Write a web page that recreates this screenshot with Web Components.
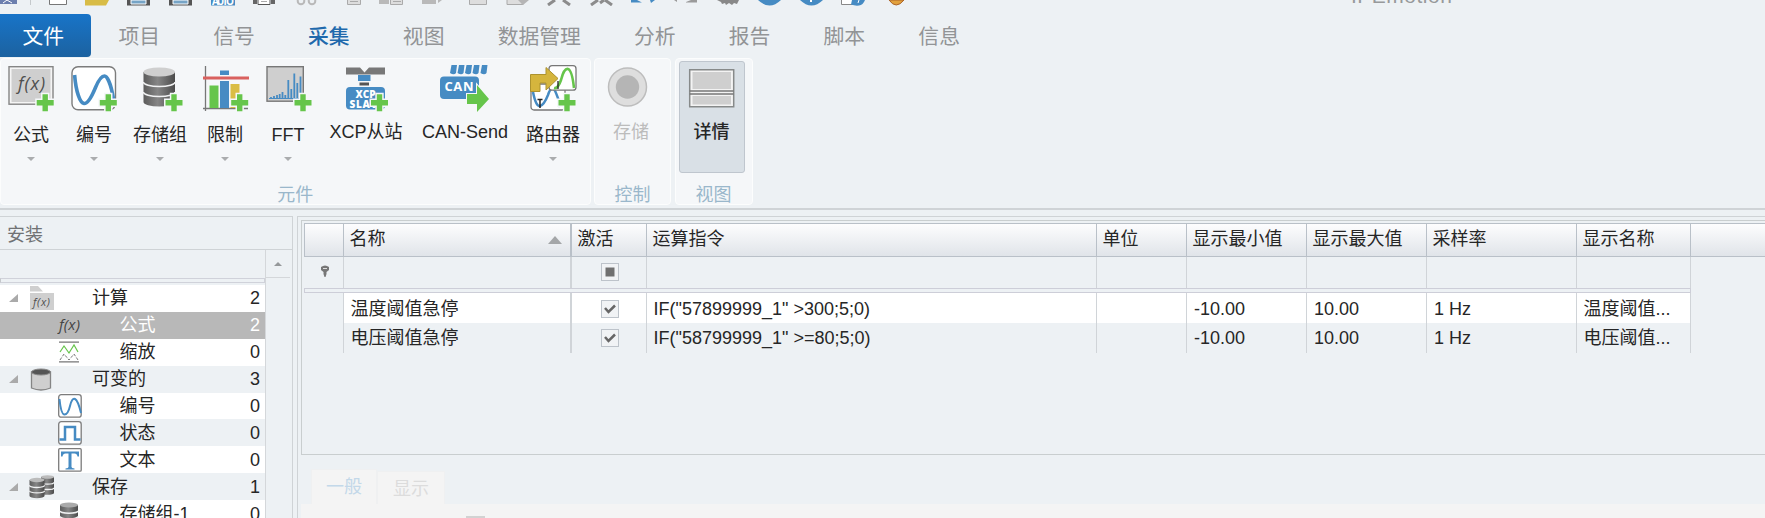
<!DOCTYPE html>
<html lang="zh-CN">
<head>
<meta charset="utf-8">
<title>IPEmotion</title>
<style>
  html, body {
    margin: 0;
    height: 100%;
    overflow: hidden;
  }

  body {
    background: #edf1f4;
    color: #262626;
    font: 18px/24px "Liberation Sans", "Noto Sans CJK SC", sans-serif;
    --line: #cfd3d6;
  }
</style>
</head>
<body>
<ie-app></ie-app>

<script>
const PLUS = (x, y) => `<path d="M${x - 2.7} ${y - 8.5}h5.4v5.8h5.8v5.4h-5.8v5.8h-5.4v-5.8h-5.8v-5.4h5.8z" fill="#66c54b" stroke="#f5f7f9" stroke-width="3" paint-order="stroke"/>`;

const DRUM = (x, y, w, h, top, body) => `
  <path d="M${x} ${y}v${h}a${w / 2} ${w / 7} 0 0 0 ${w} 0v-${h}z" fill="${body}"/>
  <ellipse cx="${x + w / 2}" cy="${y}" rx="${w / 2}" ry="${w / 7}" fill="${top}"/>
  <path d="M${x} ${y + h / 3}a${w / 2} ${w / 7} 0 0 0 ${w} 0M${x} ${y + h * 2 / 3}a${w / 2} ${w / 7} 0 0 0 ${w} 0" fill="none" stroke="#f1f2f3" stroke-width="${Math.max(1.3, w / 20)}"/>`;

const METAL = id => `<defs><linearGradient id="${id}"><stop stop-color="#5c5c5c"/><stop offset=".45" stop-color="#868686"/><stop offset="1" stop-color="#4b4b4b"/></linearGradient></defs>`;

const ICONS = {
  formula: [48, 48, `
    <rect x="2" y="1.7" width="44" height="37.5" fill="#f5f5f5" stroke="#858585" stroke-width="1.4"/>
    <rect x="4.5" y="4" width="39" height="33" fill="#cfcfcf"/>
    <text x="11" y="24.5" font-family="Open Sans" font-style="italic" font-size="18" textLength="27" fill="#505050">f(x)</text>
    ${PLUS(38.2, 37.8)}`],
  number: [48, 48, `
    <rect x="2" y="1.7" width="43.5" height="43" rx="6" fill="#fff" stroke="#7c7c7c" stroke-width="1.4"/>
    <path d="M4.6 10C6 27 10 38 14 38.500S22 31 25.500 22.500S32 11 34.500 11S41 19 43.500 34" fill="none" stroke="#468bc3" stroke-width="3.6"/>
    ${PLUS(38.3, 37.8)}`],
  storage: [48, 48, `${METAL('m1')}${DRUM(7.5, 7, 31.5, 30, '#cfcfcf', 'url(#m1)')}${PLUS(38, 37.8)}`],
  limit: [48, 48, `
    <path d="M4.500 1v45M2 43.500h45" stroke="#777" stroke-width="1.3"/>
    <path d="M8.500 20.500h9V43h-9z" fill="#66c54b"/>
    <path d="M19 5.500h9V10h-9zM19 16h9v27h-9z" fill="#468bc3"/>
    <path d="M29.500 19h9v24h-9z" fill="#dabd45"/>
    <path d="M2 13h46" stroke="#d9615f" stroke-width="3"/>
    ${PLUS(38.7, 37.8)}`],
  fft: [48, 48, `
    <rect x="3" y="1.700" width="36.300" height="34.500" fill="#cfcfcf" stroke="#777" stroke-width="1.400"/>
    <path d="M5 33.500h32" stroke="#468bc3"/>
    <path d="M7 34v-2M10 34v-3M13 34v-4M15.700 34v-5M18.500 34v-7M21.300 34v-4M24.300 34v-19M27.300 34v-10M30.300 34V8.500M33.300 34V18M36.500 34V11.500" stroke="#468bc3" stroke-width="1.800"/>
    ${PLUS(39, 37.8)}`],
  xcp: [48, 48, `
    <path d="M4 2.500h14l4.500 5 4.500-5h16v7H4z" fill="#787878"/>
    <path d="M16 10h12.500v6H16z" fill="#468bc3"/>
    <path d="M17.500 17.500h9.500v3h-9.500z" fill="#555"/>
    <rect x="4" y="22" width="39" height="22.500" rx="4" fill="#468bc3"/>
    <text x="13.500" y="32.500" font-family="Open Sans" font-weight="800" font-size="10" textLength="20" fill="#fff">XCP</text>
    <text x="7.500" y="43" font-family="Open Sans" font-weight="800" font-size="10" textLength="28" fill="#fff">SLAV</text>
    ${PLUS(37.5, 37.8)}`],
  can: [50, 48, `
    <path d="M11.500 0h5.500l-1 8q-2 2.500-6 0zM19 0h5.500l-1 8q-2 2.500-6 0zM26.500 0H32l-1 8q-2 2.500-6 0zM34 0h5.500l-1 8q-2 2.500-6 0zM42 0h5.500l-1 8q-2 2.500-6 0z" fill="#468bc3"/>
    <rect y="11.500" width="39" height="22.500" rx="4" fill="#468bc3"/>
    <text x="4.500" y="26" font-family="Open Sans" font-weight="700" font-size="13" textLength="29" fill="#fff">CAN</text>
    <path d="M27 29h10v-9l12 14-12 13v-8H27z" fill="#66c54b" stroke="#f5f7f9" stroke-width="2" paint-order="stroke"/>`],
  router: [48, 48, `
    <rect x="2" y="19" width="34" height="26" rx="3" fill="#fff" stroke="#777" stroke-width="1.300"/>
    <path d="M4 27q3 15 7 14t8-11q4-12 8-2 3 6 4 14" fill="none" stroke="#468bc3" stroke-width="2.500"/>
    <path d="M11 34v9M8.500 34.500h5" stroke="#222" stroke-width="1.500"/>
    <rect x="20" y=".7" width="27" height="24.500" rx="3" fill="#fff" stroke="#777" stroke-width="1.300"/>
    <path d="M25 23q4 1 7-8 3-12 7-11t6 19" fill="none" stroke="#66c54b" stroke-width="2.600"/>
    <path d="M29 16v8" stroke="#222" stroke-width="1.300"/>
    <path d="M1.500 26.500V9.500H17V2.500L29 13.500 17 25v-7h-6v8.500z" fill="#d5b53d" stroke="#ad932f"/>
    ${PLUS(38, 37.8)}`],
  record: [48, 48, `
    <circle cx="20.5" cy="22" r="19" fill="#dedede" stroke="#bdbdbd" stroke-width="1.500"/>
    <circle cx="20.5" cy="22" r="11.700" fill="#b5b5b5"/>`],
  details: [48, 48, `
    <path d="M1.700 4.700h44v37h-44z" fill="#f3f3f3" stroke="#878a8a" stroke-width="1.500"/>
    <path d="M4.500 7h38.500v17H4.500zM4.500 31h38.500v8.500H4.500z" fill="#cfcfcf"/>
    <path d="M1.700 26h44M1.700 29h44" stroke="#777" stroke-width="1.300"/>`],
  folderFx: [26, 26, `
    <path d="M1 1h8l5 5.500H1zM1 8h24v17H1z" fill="#cfcfcf"/>
    <text x="4" y="21" font-family="Open Sans" font-style="italic" font-size="11" textLength="17" fill="#505050">f(x)</text>`],
  fx: [26, 26, `<text x="2" y="18" font-family="Open Sans" font-style="italic" font-size="15" textLength="21" fill="#444">f(x)</text>`],
  scale: [26, 26, `
    <path d="M2 3.200h20M2 22.800h20" stroke="#777" stroke-width="1.300"/>
    <path d="M3 13l4-6 5 7 5-8 4 7" fill="none" stroke="#66c54b" stroke-width="1.200"/>
    <path d="M3 21l4-6 5 6 5-6 4 6" fill="none" stroke="#777" stroke-dasharray="3 1.500"/>`],
  drum: [26, 26, `
    <path d="M2.500 6v16q9.500 4 19 0V6z" fill="#cfcfcf" stroke="#858585" stroke-width="1.300"/>
    <ellipse cx="12" cy="6" rx="9.500" ry="3" fill="#555" stroke="#888"/>`],
  wave: [26, 26, `
    <rect x="1.700" y="1.700" width="22.500" height="22.500" rx="2.500" fill="#fff" stroke="#7c7c7c" stroke-width="1.300"/>
    <path d="M2.500 6Q4 21.500 7.500 21.500T13 13T18 6T24 20" fill="none" stroke="#468bc3" stroke-width="2"/>`],
  state: [26, 26, `
    <rect x="1.700" y="1.700" width="22.500" height="22.500" rx="2.500" fill="#fff" stroke="#7c7c7c" stroke-width="1.300"/>
    <path d="M2.500 19.500H8V7h10v12.500h5.500" fill="none" stroke="#468bc3" stroke-width="2.500"/>`],
  text: [26, 26, `
    <rect x="1.700" y="1.700" width="22.500" height="22.500" rx="1" fill="#fff" stroke="#7c7c7c" stroke-width="1.300"/>
    <path d="M4 4.500h18v5h-1.500q-.5-3-3-3h-3V20q0 1 3 1.500v1h-9v-1q3-.5 3-1.500V6.500h-3q-2.500 0-3 3H4z" fill="#468bc3"/>`],
  drums: [26, 26, `${METAL('m2')}${DRUM(12, 3, 13, 16, '#bbb', 'url(#m2)')}${DRUM(.5, 6, 15, 16, '#bbb', 'url(#m2)')}`],
  drumDark: [26, 26, `${METAL('m3')}${DRUM(3, 4, 18, 17, '#aaa', 'url(#m3)')}`],
  pin: [12, 14, `<path d="M1 2q4-3 8 0v3L6.500 7v2l-1 3H4.500L3.500 9V7L1 5z" fill="#777"/><path d="M3 3.500h4" stroke="#ddd"/>`],
  // lower edges of the quick access buttons, the rest is above the window
  quick: [920, 6, `
    <path d="M0 0h17v4H0z" fill="#6c7fae"/><path d="M3 3l4-3 5 3" stroke="#fff" fill="none"/>
    <path d="M30.500 0v5" stroke="#c5c9cc"/>
    <path d="M49.500-2h17v6.500h-17z" fill="#fff" stroke="#777"/>
    <path d="M85 0h24l-3 5.500H85z" fill="#d8bc46"/>
    <path d="M127 0h23v5.500h-23zM169 0h23v5.500h-23z" fill="#555"/>
    <path d="M131 0h15v4h-15zM173 0h15v4h-15z" fill="#76a4c6" stroke="#fff"/>
    <path d="M211 0h24v5.500h-24z" fill="#468bc3"/>
    <text x="212" y="4.500" font-family="Open Sans" font-weight="700" font-size="10" textLength="22" fill="#fff">AUTO</text>
    <path d="M253 0h4v4h-4zM271 0h4v4h-4z" fill="#666"/><path d="M258-1h12v5.500h-12z" fill="#fff" stroke="#555"/><path d="M261 1.500h6" stroke="#aaa"/>
    <g fill="none" stroke="#b9b9b9" stroke-width="2"><circle cx="301" cy="1" r="3.300"/><circle cx="312" cy="1" r="3.300"/></g>
    <path d="M347.500-1h13v5.500h-13zM390.500-1h12v5.500h-12zM469.500-1h17v5.500h-17z" fill="#ddd" stroke="#aaa"/>
    <path d="M350 1.500h8M393 1.500h8" stroke="#aaa"/>
    <path d="M379 0h10v4h-10zM422 0h14v4h-14zM438 0h4l-4 3z" fill="#b9b9b9"/>
    <path d="M507-1h12l4 5.500h-16z" fill="#ddd" stroke="#aaa"/><path d="M518 0h11l-6 5z" fill="#b5b5b5"/>
    <path d="M548 5l7-5M570 5l-7-5M591 5l7-5M612 5l-7-5M600 3l4-3" stroke="#8c8c8c" stroke-width="3"/>
    <path d="M631 0h6l5 2.500h-11zM650 0h5l-4 3z" fill="#468bc3"/>
    <path d="M686 2l5-2h6v2.500h-11zM674 0h3v2z" fill="#9a9a9a"/>
    <path d="M717 0h22l-2 4-3-1-2 2-3-2-3 2-1-2-3 1-1-2z" fill="#888"/>
    <path d="M758 0h23q-11.500 11-23 0zM800 0h23q-11.500 11-23 0z" fill="#468bc3"/>
    <path d="M811 0v2" stroke="#fff" stroke-width="2"/>
    <path d="M841.500-1h12v5.500h-12z" fill="#fff" stroke="#888"/><path d="M852 0h13q-2 5-6 5.500t-8-1z" fill="#468bc3"/><path d="M858 3l1-3" stroke="#fff"/>
    <path d="M889 0q7 10 15 0z" fill="#e2a13c" stroke="#aa6328"/>`]
};

class UiIcon extends HTMLElement {
  connectedCallback() {
    const [w, h, art] = ICONS[this.getAttribute('name')];
    this.attachShadow({ mode: 'open' }).innerHTML = `
      <style>
        :host { display: block; flex: none; width: ${w}px; height: ${h}px; }
        svg { display: block; }
      </style>
      <svg width="${w}" height="${h}" viewBox="0 0 ${w} ${h}">${art}</svg>
    `;
  }
}

class MenuTab extends HTMLElement {
  constructor() {
    super();
    this.attachShadow({ mode: 'open' }).innerHTML = `
      <style>
        :host {
          display: block;
          margin-right: 53.200px;
          font-size: 20.800px;
          line-height: 45px;
          color: #929496;
          white-space: nowrap;
        }
        :host([active]) { color: #2069ac; font-weight: 500; }
        :host([file]) {
          box-sizing: border-box;
          width: 91px;
          height: 43px;
          margin-right: 27.500px;
          padding-left: 22.500px;
          border-radius: 0 4px 4px 0;
          background: linear-gradient(#1874c8, #1c62a0);
          color: #fff;
        }
      </style>
      <slot></slot>
    `;
  }
}

class RibbonButton extends HTMLElement {
  connectedCallback() {
    const arrow = this.hasAttribute('menu');
    this.attachShadow({ mode: 'open' }).innerHTML = `
      <style>
        :host {
          display: flex;
          flex-direction: column;
          align-items: center;
          box-sizing: border-box;
          flex: none;
          width: ${this.getAttribute('width')}px;
          height: 112px;
          padding-top: 4px;
          white-space: nowrap;
        }
        :host([pressed]) {
          padding-top: 3px;
          border: 1.500px solid #bfc6ce;
          border-radius: 3px;
          background: #d9e0e6;
          font-weight: 500;
        }
        :host([disabled]) { color: #bcbcbc; }
        .label { margin-top: ${arrow ? 10 : 7}px; }
        .arrow {
          margin-top: 10px;
          border: 4px solid transparent;
          border-top-color: #aaacae;
          border-bottom: 0;
        }
      </style>
      <ui-icon name="${this.getAttribute('icon')}"></ui-icon>
      <span class="label"><slot></slot></span>
      ${arrow ? '<span class="arrow"></span>' : ''}
    `;
  }
}

class RibbonGroup extends HTMLElement {
  connectedCallback() {
    this.attachShadow({ mode: 'open' }).innerHTML = `
      <style>
        :host {
          display: flex;
          flex-direction: column;
          box-sizing: border-box;
          height: 147px;
          padding-top: 2px;
          border: 1px solid #fcfdfd;
          border-radius: 4px;
          background: #f5f7f9;
        }
        .items { display: flex; height: 112px; }
        .caption { padding-top: 10px; text-align: center; color: #9ab7cb; }
      </style>
      <div class="items"><slot></slot></div>
      <div class="caption">${this.getAttribute('caption')}</div>
    `;
  }
}

class TreeRow extends HTMLElement {
  connectedCallback() {
    const group = this.hasAttribute('group');
    this.attachShadow({ mode: 'open' }).innerHTML = `
      <style>
        :host {
          display: flex;
          align-items: center;
          box-sizing: border-box;
          height: 26.900px;
          padding: 0 5px 0 ${group ? 9 : 57}px;
          background: #fff;
        }
        :host([alt]) { background: #edf1f4; }
        :host([selected]) { background: #b8b8b8; color: #fff; }
        .expander {
          width: 0;
          margin-right: 11px;
          border-left: 9px solid transparent;
          border-bottom: 8px solid #aaa;
        }
        .name { flex: 1; margin-left: ${group ? 37 : 36.5}px; white-space: nowrap; }
      </style>
      ${group ? '<span class="expander"></span>' : ''}
      <ui-icon name="${this.getAttribute('icon')}"></ui-icon>
      <span class="name"><slot></slot></span>
      <span>${this.getAttribute('count')}</span>
    `;
  }
}

class TreePanel extends HTMLElement {
  constructor() {
    super();
    this.attachShadow({ mode: 'open' }).innerHTML = `
      <style>
        :host {
          display: flex;
          flex-direction: column;
          box-sizing: border-box;
          width: 293px;
          border: solid var(--line);
          border-width: 1px 1px 0 0;
        }
        .title {
          height: 32px;
          padding-left: 7px;
          border-bottom: 1px solid var(--line);
          line-height: 37px;
          color: #707274;
        }
        .body { display: flex; flex: 1; min-height: 0; }
        .list { width: 265px; border-right: 1px solid #d4d7da; }
        .filter { height: 28px; }
        .split {
          box-sizing: border-box;
          height: 5px;
          margin-bottom: 2px;
          border: 1px solid #d0d2da;
          border-left-color: #c5c8cc;
        }
        .up {
          display: flex;
          align-items: center;
          justify-content: center;
          width: 24px;
          height: 26px;
          margin-top: 1px;
          border-bottom: 1px solid #d4d7da;
        }
        .up::before {
          content: "";
          border: 4px solid transparent;
          border-bottom-color: #95989a;
          border-top: 0;
        }
      </style>
      <div class="title">安装</div>
      <div class="body">
        <div class="list">
          <div class="filter"></div>
          <div class="split"></div>
          <slot></slot>
        </div>
        <div class="up"></div>
      </div>
    `;
  }
}

class CheckBox extends HTMLElement {
  connectedCallback() {
    const mixed = this.hasAttribute('mixed');
    this.attachShadow({ mode: 'open' }).innerHTML = `
      <style>
        :host {
          display: block;
          box-sizing: border-box;
          width: 18px;
          height: 18px;
          border: 1.500px solid #bdc3ca;
          background: #f1f3f5;
        }
        svg { display: block; }
      </style>
      <svg width="16" height="16" viewBox="0 0 16 16">
        ${mixed ? '<path d="M3.500 3.500h9v9h-9z" fill="#707070"/>' : '<path d="M3 7l3.500 4L13 4.500" fill="none" stroke="#666" stroke-width="2.500"/>'}
      </svg>
    `;
  }
}

const HEADERS = ['', '名称', '激活', '运算指令', '单位', '显示最小值', '显示最大值', '采样率', '显示名称'];

const ROWS = [
  ['', '温度阈值急停', '<check-box></check-box>', 'IF("57899999_1" &gt;300;5;0)', '', '-10.00', '10.00', '1 Hz', '温度阈值...'],
  ['', '电压阈值急停', '<check-box></check-box>', 'IF("58799999_1" &gt;=80;5;0)', '', '-10.00', '10.00', '1 Hz', '电压阈值...']
];

class DataGrid extends HTMLElement {
  constructor() {
    super();
    const filters = ['<ui-icon name="pin"></ui-icon>', '', '<check-box mixed></check-box>', '', '', '', '', '', ''];
    this.attachShadow({ mode: 'open' }).innerHTML = `
      <style>
        :host {
          display: block;
          box-sizing: border-box;
          padding: 2px 0 0 2px;
          border: 1px solid #c9cecf;
          border-right: 0;
        }
        .row {
          display: grid;
          grid-template-columns: 40px 228px 75px 450px 90px 120px 120px 150px 114px;
          box-sizing: border-box;
        }
        .cell {
          display: flex;
          align-items: center;
          box-sizing: border-box;
          padding-left: 6.500px;
          border-right: 1px solid #d0d4d8;
          white-space: nowrap;
        }
        .cell:nth-child(2) { border-right-width: 2px; }
        .cell:nth-child(3) check-box { margin-left: 22px; }
        .head {
          height: 34px;
          border: solid #b9c0c8;
          border-width: 1px 0;
          background: linear-gradient(#fdfdfe, #e0e4e9);
        }
        .head .cell { padding: 0 0 2px 5.500px; border-color: #b9c0c8; }
        .head .cell:first-child { border-left: 1px solid #b9c0c8; }
        .sort {
          margin: 2px 8px 0 auto;
          border: 7px solid transparent;
          border-bottom: 8px solid #a4a6a8;
          border-top: 0;
        }
        .filter { height: 31px; }
        .filter .cell { padding-bottom: 2px; }
        .filter .cell:first-child { padding-left: 15.500px; }
        .split {
          box-sizing: border-box;
          width: 1387px;
          height: 5px;
          border: 1px solid #cdced8;
        }
        .data { height: 30px; }
        .data .cell:nth-child(6), .data .cell:nth-child(7), .data .cell:nth-child(8) { padding-left: 7px; }
        .data.odd .cell { padding-top: 1px; }
        .data.odd .cell:not(:first-child) { background: #fff; }
      </style>
      <div class="row head">${HEADERS.map((h, i) => `<div class="cell">${h}${i === 1 ? '<span class="sort"></span>' : ''}</div>`).join('')}</div>
      <div class="row filter">${filters.map(f => `<div class="cell">${f}</div>`).join('')}</div>
      <div class="split"></div>
      ${ROWS.map((row, i) => `<div class="row data ${i % 2 ? '' : 'odd'}">${row.map(c => `<div class="cell">${c}</div>`).join('')}</div>`).join('')}
    `;
  }
}

class DetailTabs extends HTMLElement {
  constructor() {
    super();
    this.attachShadow({ mode: 'open' }).innerHTML = `
      <style>
        :host { display: block; }
        .tabs { display: flex; align-items: flex-end; height: 35px; padding-left: 10px; color: #dcdcdc; }
        .tab {
          box-sizing: border-box;
          width: 66px;
          height: 33px;
          padding-top: 5px;
          border: 1px solid #eff0f1;
          border-bottom: 0;
          background: #f4f4f4;
          text-align: center;
        }
        .tab.on { height: 35px; color: #c3d8e9; }
        .tab + .tab { width: 68px; }
        .page { height: 14px; padding: 12px 0 0 165px; background: #f4f4f4; }
        .field { width: 19px; height: 20px; background: #d2d2d2; }
      </style>
      <div class="tabs">
        <div class="tab on">一般</div>
        <div class="tab">显示</div>
      </div>
      <div class="page"><div class="field"></div></div>
    `;
  }
}

class IeApp extends HTMLElement {
  constructor() {
    super();
    this.attachShadow({ mode: 'open' }).innerHTML = `
      <style>
        :host { display: flex; flex-direction: column; height: 518px; overflow: hidden; }
        .titlebar { display: flex; height: 14px; }
        .caption {
          margin: -16px 0 0 431px;
          font-size: 21px;
          letter-spacing: .5px;
          line-height: 24px;
          color: #97999b;
        }
        .menu { display: flex; height: 44px; }
        .ribbon {
          display: flex;
          gap: 3.500px;
          height: 150px;
          border-bottom: 2px solid #cfd3d6;
        }
        ribbon-group:first-child { box-sizing: border-box; width: 590.500px; }
        ribbon-group:nth-child(2) { width: 77px; }
        ribbon-group:nth-child(3) { width: 78px; }
        ribbon-group:first-child ribbon-button:first-child { margin-left: -1px; }
        ribbon-button[disabled] { margin-left: 1px; }
        ribbon-button[pressed] { margin-left: 3px; }
        .main { display: flex; flex: 1; min-height: 0; padding-top: 6px; }
        .work {
          flex: 1;
          min-width: 0;
          margin-left: 4px;
          border: solid var(--line);
          border-width: 1px 0 0 1px;
          padding: 3px 0 0 3px;
        }
        data-grid { height: 235px; margin-bottom: 14px; }
      </style>
      <div class="titlebar">
        <ui-icon name="quick"></ui-icon>
        <div class="caption">IPEmotion</div>
      </div>
      <div class="menu">
        <menu-tab file>文件</menu-tab>
        <menu-tab>项目</menu-tab>
        <menu-tab>信号</menu-tab>
        <menu-tab active>采集</menu-tab>
        <menu-tab>视图</menu-tab>
        <menu-tab>数据管理</menu-tab>
        <menu-tab>分析</menu-tab>
        <menu-tab>报告</menu-tab>
        <menu-tab>脚本</menu-tab>
        <menu-tab>信息</menu-tab>
      </div>
      <div class="ribbon">
        <ribbon-group caption="元件">
          <ribbon-button width="62" icon="formula" menu>公式</ribbon-button>
          <ribbon-button width="64" icon="number" menu>编号</ribbon-button>
          <ribbon-button width="68" icon="storage" menu>存储组</ribbon-button>
          <ribbon-button width="62" icon="limit" menu>限制</ribbon-button>
          <ribbon-button width="64" icon="fft" menu>FFT</ribbon-button>
          <ribbon-button width="92" icon="xcp">XCP从站</ribbon-button>
          <ribbon-button width="106" icon="can">CAN-Send</ribbon-button>
          <ribbon-button width="70" icon="router" menu>路由器</ribbon-button>
        </ribbon-group>
        <ribbon-group caption="控制">
          <ribbon-button width="70" icon="record" disabled>存储</ribbon-button>
        </ribbon-group>
        <ribbon-group caption="视图">
          <ribbon-button width="66" icon="details" pressed>详情</ribbon-button>
        </ribbon-group>
      </div>
      <div class="main">
        <tree-panel>
          <tree-row group icon="folderFx" count="2">计算</tree-row>
          <tree-row selected icon="fx" count="2">公式</tree-row>
          <tree-row icon="scale" count="0">缩放</tree-row>
          <tree-row group alt icon="drum" count="3">可变的</tree-row>
          <tree-row icon="wave" count="0">编号</tree-row>
          <tree-row alt icon="state" count="0">状态</tree-row>
          <tree-row icon="text" count="0">文本</tree-row>
          <tree-row group alt icon="drums" count="1">保存</tree-row>
          <tree-row icon="drumDark" count="0">存储组-1</tree-row>
        </tree-panel>
        <div class="work">
          <data-grid></data-grid>
          <detail-tabs></detail-tabs>
        </div>
      </div>
    `;
  }
}

customElements.define('ui-icon', UiIcon);
customElements.define('menu-tab', MenuTab);
customElements.define('ribbon-button', RibbonButton);
customElements.define('ribbon-group', RibbonGroup);
customElements.define('tree-row', TreeRow);
customElements.define('tree-panel', TreePanel);
customElements.define('check-box', CheckBox);
customElements.define('data-grid', DataGrid);
customElements.define('detail-tabs', DetailTabs);
customElements.define('ie-app', IeApp);
</script>
</body>
</html>
